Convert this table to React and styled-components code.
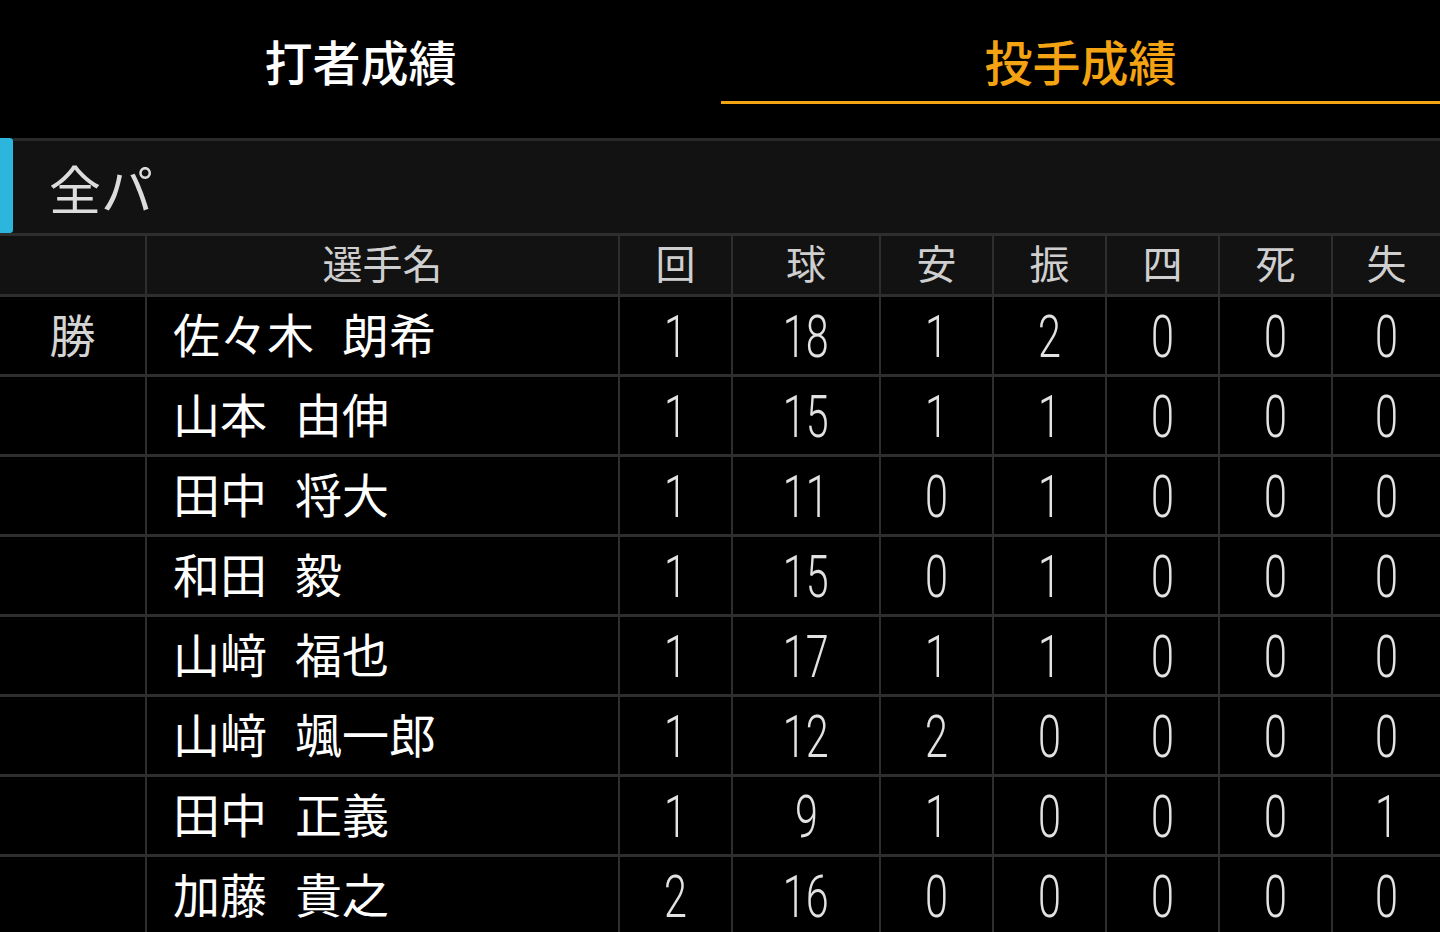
import React from "react";
import styled, { createGlobalStyle } from "styled-components";

const GlobalStyle = createGlobalStyle`
  html, body { margin: 0; padding: 0; background: #000; }
  body { font-family: "Noto Sans CJK JP", "Noto Sans", sans-serif; overflow: hidden; }
`;

const COLS = "145px 473px 113px 148px 113px 113px 113px 113px 1fr";

const Page = styled.div`
  width: 1440px;
  height: 932px;
  background: #000;
  overflow: hidden;
`;

const Tabs = styled.div`
  display: grid;
  grid-template-columns: 721px 1fr;
  height: 104px;
`;

const Tab = styled.div`
  box-sizing: border-box;
  height: 104px;
  padding-top: 18px;
  display: flex;
  align-items: center;
  justify-content: center;
  font-size: 48px;
  font-weight: 500;
  color: ${(p) => (p.$active ? "#f4a312" : "#ffffff")};
  border-bottom: 3px solid ${(p) => (p.$active ? "#f4a312" : "transparent")};
`;

const SectionBar = styled.div`
  margin-top: 34px;
  display: flex;
  height: 95px;
`;

const Accent = styled.div`
  width: 13px;
  background: #2cb6de;
  border-radius: 0 3px 3px 0;
`;

const SectionLabel = styled.div`
  flex: 1;
  box-sizing: border-box;
  border-top: 3px solid #2a2a2a;
  background: #121212;
  display: flex;
  align-items: center;
  padding-left: 36px;
  font-size: 52px;
  color: #dcdcdc;
`;

const Table = styled.div`
  display: flex;
  flex-direction: column;
  gap: 3px;
  background: #2e2e2e;
  padding-top: 3px;
`;

const Row = styled.div`
  display: grid;
  grid-template-columns: ${COLS};
  height: ${(p) => (p.$head ? "58px" : "77px")};
  background: ${(p) => (p.$head ? "#121212" : "#000")};
  flex-shrink: 0;
`;

const Cell = styled.div`
  display: flex;
  align-items: center;
  justify-content: ${(p) => (p.$left ? "flex-start" : "center")};
  padding-left: ${(p) => (p.$left ? "26px" : "0")};
  border-left: ${(p) => (p.$first ? "none" : "2px solid #2e2e2e")};
  box-sizing: border-box;
`;

const HeadText = styled.span`
  font-size: 40px;
  color: #cfcfcf;
  line-height: 1;
  position: relative;
  top: -3px;
`;

const Mark = styled.span`
  font-size: 46px;
  color: #d4d4d4;
  line-height: 1;
  position: relative;
  top: -3px;
`;

const Name = styled.span`
  display: flex;
  gap: 28px;
  font-size: 47px;
  color: #ffffff;
  font-weight: 400;
  line-height: 1;
  position: relative;
  top: -3px;
`;

const Num = styled.span`
  display: inline-block;
  font-family: Roboto, "Noto Sans", sans-serif;
  font-weight: 300;
  font-size: 59px;
  line-height: 1;
  color: #e2e2e2;
  transform: scaleX(0.7);
  position: relative;
  top: 1px;
`;

const heads = ["回", "球", "安", "振", "四", "死", "失"];

const rows = [
  { mark: "勝", name: "佐々木 朗希", v: [1, 18, 1, 2, 0, 0, 0] },
  { mark: "", name: "山本 由伸", v: [1, 15, 1, 1, 0, 0, 0] },
  { mark: "", name: "田中 将大", v: [1, 11, 0, 1, 0, 0, 0] },
  { mark: "", name: "和田 毅", v: [1, 15, 0, 1, 0, 0, 0] },
  { mark: "", name: "山﨑 福也", v: [1, 17, 1, 1, 0, 0, 0] },
  { mark: "", name: "山﨑 颯一郎", v: [1, 12, 2, 0, 0, 0, 0] },
  { mark: "", name: "田中 正義", v: [1, 9, 1, 0, 0, 0, 1] },
  { mark: "", name: "加藤 貴之", v: [2, 16, 0, 0, 0, 0, 0] },
];

export default function App() {
  return (
    <Page>
      <GlobalStyle />
      <Tabs>
        <Tab>打者成績</Tab>
        <Tab $active>投手成績</Tab>
      </Tabs>
      <SectionBar>
        <Accent />
        <SectionLabel>全パ</SectionLabel>
      </SectionBar>
      <Table>
        <Row $head>
          <Cell $first />
          <Cell>
            <HeadText>選手名</HeadText>
          </Cell>
          {heads.map((h) => (
            <Cell key={h}>
              <HeadText>{h}</HeadText>
            </Cell>
          ))}
        </Row>
        {rows.map((r, i) => (
          <Row key={i}>
            <Cell $first>
              <Mark>{r.mark}</Mark>
            </Cell>
            <Cell $left>
              <Name>
                {r.name.split(" ").map((part) => (
                  <span key={part}>{part}</span>
                ))}
              </Name>
            </Cell>
            {r.v.map((n, j) => (
              <Cell key={j}>
                <Num>{n}</Num>
              </Cell>
            ))}
          </Row>
        ))}
      </Table>
    </Page>
  );
}
